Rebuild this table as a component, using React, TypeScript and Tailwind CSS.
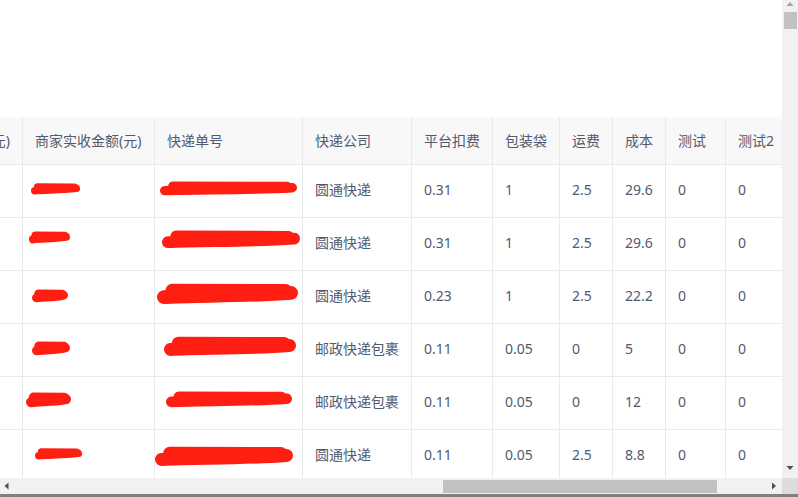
import React from "react";

type B = [number, number, number, number];

const RED = "#fe1e12";

function Blob({ b }: { b: B }) {
  const [x1, y1, x2, y2] = b;
  const h = y2 - y1;
  const cy = (y1 + y2) / 2;
  const sw = h * 0.62;
  const r = sw / 2;
  const w = x2 - x1;
  return (
    <>
      <path
        d={`M ${x1 + r} ${cy + h * 0.14} C ${x1 + w * 0.3} ${cy + h * 0.05}, ${x1 + w * 0.6} ${cy + h * 0.12}, ${x2 - r} ${cy - h * 0.05}`}
        stroke={RED}
        strokeWidth={sw}
        strokeLinecap="round"
        fill="none"
      />
      <path
        d={`M ${x1 + r + w * 0.06} ${cy - h * 0.16} L ${x2 - r - w * 0.04} ${cy - h * 0.14}`}
        stroke={RED}
        strokeWidth={sw}
        strokeLinecap="round"
        fill="none"
      />
    </>
  );
}

function Redact({ w, b }: { w: number; b: B }) {
  return (
    <svg width={w} height={52} viewBox={`0 0 ${w} 52`} className="block">
      <Blob b={b} />
    </svg>
  );
}

const colW = [
  "w-[23px]",
  "w-[132px]",
  "w-[148px]",
  "w-[109px]",
  "w-[81px]",
  "w-[67px]",
  "w-[53px]",
  "w-[53px]",
  "w-[60px]",
  "w-[110px]",
];

const headers = [
  "实付金额(元)",
  "商家实收金额(元)",
  "快递单号",
  "快递公司",
  "平台扣费",
  "包装袋",
  "运费",
  "成本",
  "测试",
  "测试2",
];

const rows: { a: B; b: B; vals: string[] }[] = [
  { a: [8, 18, 57, 30], b: [5, 16, 142, 31], vals: ["圆通快递", "0.31", "1", "2.5", "29.6", "0", "0"] },
  { a: [6, 13, 47, 26], b: [7, 12, 145, 31], vals: ["圆通快递", "0.31", "1", "2.5", "29.6", "0", "0"] },
  { a: [9, 18, 45, 32], b: [2, 12, 143, 34], vals: ["圆通快递", "0.23", "1", "2.5", "22.2", "0", "0"] },
  { a: [9, 17, 47, 32], b: [9, 12, 141, 33], vals: ["邮政快递包裹", "0.11", "0.05", "0", "5", "0", "0"] },
  { a: [3, 15, 48, 31], b: [11, 14, 137, 31], vals: ["邮政快递包裹", "0.11", "0.05", "0", "12", "0", "0"] },
  { a: [12, 18, 59, 30], b: [0, 16, 138, 37], vals: ["圆通快递", "0.11", "0.05", "2.5", "8.8", "0", "0"] },
];

const cellBase =
  "shrink-0 flex items-center border-r border-[#e8eaec] whitespace-nowrap overflow-hidden";

export default function App() {
  return (
    <div className="w-[798px] h-[497px] flex flex-col overflow-hidden bg-white font-['Noto_Sans','Noto_Sans_CJK_SC',sans-serif] text-[14px] text-[#515a6e]">
      <div className="flex h-[478px]">
        <div className="w-[782px] overflow-hidden flex flex-col">
          <div className="h-[117px] shrink-0" />
          {/* header */}
          <div className="flex h-[48px] shrink-0 bg-[#f8f8f9] border-b border-[#e8eaec]">
            {headers.map((h, i) => (
              <div
                key={i}
                className={`${cellBase} ${colW[i]} ${i === 0 ? "justify-end pr-3" : "px-3"}`}
              >
                <span>{h}</span>
              </div>
            ))}
          </div>
          {rows.map((r, ri) => (
            <div key={ri} className="flex h-[53px] shrink-0 border-b border-[#e8eaec]">
              <div className={`${cellBase} ${colW[0]}`} />
              <div className={`${cellBase} ${colW[1]}`}>
                <Redact w={131} b={r.a} />
              </div>
              <div className={`${cellBase} ${colW[2]}`}>
                <Redact w={147} b={r.b} />
              </div>
              {r.vals.map((v, vi) => (
                <div key={vi} className={`${cellBase} ${colW[vi + 3]} px-3 pb-[3px]`}>
                  <span>{v}</span>
                </div>
              ))}
            </div>
          ))}
        </div>
        {/* vertical scrollbar */}
        <div className="w-[16px] shrink-0 bg-[#f1f1f1] flex flex-col">
          <svg width="16" height="12" viewBox="0 0 16 12" className="block shrink-0">
            <polygon points="4.5,6 8,2 11.5,6" fill="#a3a3a3" />
          </svg>
          <div className="ml-[2px] w-[13px] h-[17px] bg-[#c1c1c1] shrink-0" />
          <div className="flex-1" />
          <svg width="16" height="16" viewBox="0 0 16 16" className="block shrink-0">
            <polygon points="4.5,4 11.5,4 8,8" fill="#505050" />
          </svg>
        </div>
      </div>
      {/* horizontal scrollbar */}
      <div className="flex h-[16px] shrink-0 bg-[#f1f1f1]">
        <svg width="16" height="16" viewBox="0 0 16 16" className="block shrink-0">
          <polygon points="8.5,4.5 8.5,11.5 4.5,8" fill="#505050" />
        </svg>
        <div className="ml-[427px] mt-[2px] w-[274px] h-[13px] bg-[#c1c1c1] shrink-0" />
        <div className="flex-1" />
        <svg width="16" height="16" viewBox="0 0 16 16" className="block shrink-0">
          <polygon points="6,4.5 6,11.5 10,8" fill="#505050" />
        </svg>
        <div className="w-[16px] h-[16px] bg-[#dcdcdc] shrink-0" />
      </div>
      <div className="h-[3px] shrink-0 bg-[#808080]" />
    </div>
  );
}
